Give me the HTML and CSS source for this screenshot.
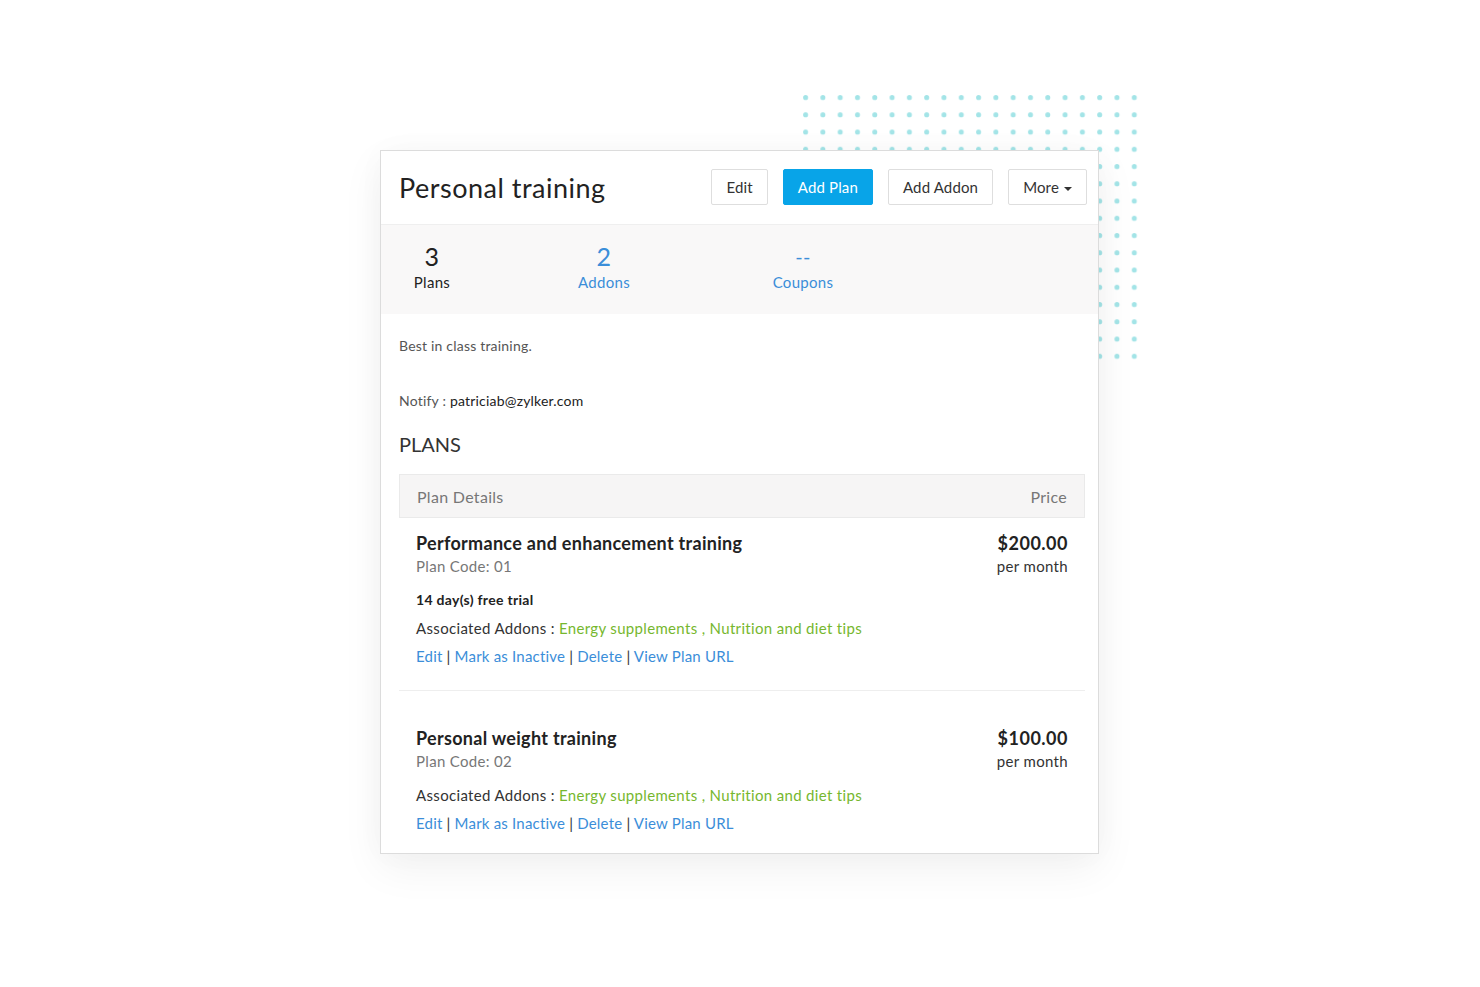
FILE: index.html
```html
<!DOCTYPE html>
<html>
<head>
<meta charset="utf-8">
<link rel="stylesheet" href="styles.css">
</head>
<body>
<div class="stage">
  <svg class="dots" width="340" height="270" viewBox="0 0 340 270">
    <defs>
      <pattern id="dp" x="0" y="0" width="17.3" height="17.25" patternUnits="userSpaceOnUse">
        <circle cx="2.6" cy="2.6" r="2.5" fill="#a3e4e7"/>
      </pattern>
    </defs>
    <rect x="0" y="0" width="340" height="270" fill="url(#dp)"/>
  </svg>
  <div class="card">
    <div class="card-head">
      <h1 class="title">Personal training</h1>
      <div class="actions">
        <button class="btn">Edit</button>
        <button class="btn btn-primary">Add Plan</button>
        <button class="btn">Add Addon</button>
        <button class="btn">More <span class="caret"></span></button>
      </div>
    </div>
    <div class="stats">
      <div class="stat stat-plans"><div class="num">3</div><div class="lbl">Plans</div></div>
      <div class="stat stat-addons link"><div class="num">2</div><div class="lbl">Addons</div></div>
      <div class="stat stat-coupons link"><div class="num dash">--</div><div class="lbl">Coupons</div></div>
    </div>
    <div class="body">
      <p class="desc">Best in class training.</p>
      <p class="notify">Notify : <span class="email">patriciab@zylker.com</span></p>
      <h2 class="section">PLANS</h2>
      <div class="table-head"><span>Plan Details</span><span>Price</span></div>
      <div class="plan">
        <div class="plan-top">
          <div>
            <div class="plan-name">Performance and enhancement training</div>
            <div class="plan-code">Plan Code: 01</div>
          </div>
          <div class="price">
            <div class="amount">$200.00</div>
            <div class="per">per month</div>
          </div>
        </div>
        <div class="trial">14 day(s) free trial</div>
        <div class="addons">Associated Addons : <span class="green">Energy supplements , Nutrition and diet tips</span></div>
        <div class="links"><a>Edit</a> <span class="sep">|</span> <a>Mark as Inactive</a> <span class="sep">|</span> <a>Delete</a> <span class="sep">|</span> <a>View Plan URL</a></div>
      </div>
      <div class="plan plan-last">
        <div class="plan-top">
          <div>
            <div class="plan-name">Personal weight training</div>
            <div class="plan-code">Plan Code: 02</div>
          </div>
          <div class="price">
            <div class="amount">$100.00</div>
            <div class="per">per month</div>
          </div>
        </div>
        <div class="addons">Associated Addons : <span class="green">Energy supplements , Nutrition and diet tips</span></div>
        <div class="links"><a>Edit</a> <span class="sep">|</span> <a>Mark as Inactive</a> <span class="sep">|</span> <a>Delete</a> <span class="sep">|</span> <a>View Plan URL</a></div>
      </div>
    </div>
  </div>
</div>
</body>
</html>
```

FILE: styles.css
```css
* { box-sizing: border-box; }
html, body { margin: 0; padding: 0; background: #fff; }
body {
  font-family: Lato, "Liberation Sans", sans-serif;
  color: #222;
  width: 1480px;
  height: 987px;
  overflow: hidden;
}
.stage {
  position: relative;
  padding: 150px 0 0 380px;
}
.dots {
  position: absolute;
  left: 803px;
  top: 95px;
  z-index: 0;
}
.card {
  position: relative;
  z-index: 1;
  width: 719px;
  height: 704px;
  background: #fff;
  border: 1px solid #dcdcdc;
  box-shadow: 0 14px 40px rgba(0,0,0,0.06), 0 0 30px rgba(0,0,0,0.025);
}
.card-head {
  height: 74px;
  display: flex;
  align-items: center;
  justify-content: space-between;
  padding: 0 11px 0 18px;
  border-bottom: 1px solid #efefef;
}
.title {
  margin: 0;
  font-size: 27px;
  font-weight: 400;
  color: #222;
  letter-spacing: 0.5px;
}
.actions { display: flex; gap: 15px; margin-top: -1px; }
.btn {
  height: 36px;
  font-family: inherit;
  font-size: 15px;
  letter-spacing: 0.15px;
  color: #333;
  background: #fff;
  border: 1px solid #dedede;
  border-radius: 2px;
  padding: 0 14px;
}
.btn-primary {
  background: #08a4e8;
  border-color: #08a4e8;
  color: #fff;
}
.caret {
  display: inline-block;
  width: 0; height: 0;
  border-left: 4px solid transparent;
  border-right: 4px solid transparent;
  border-top: 4px solid #333;
  vertical-align: middle;
  margin-left: 1px;
}
.stats {
  height: 89px;
  background: #f9f8f8;
  display: flex;
  padding-top: 15px;
}
.stat { text-align: center; letter-spacing: 0.3px; }
.stat-plans { width: 102px; }
.stat-addons { width: 242px; }
.stat-coupons { width: 156px; }
.num { font-size: 25px; line-height: 32px; color: #222; }
.lbl { font-size: 15px; line-height: 20px; color: #222; }
.link .num, .link .lbl { color: #3b8ed9; }
.dash { font-size: 20px; }
.body { padding: 0 13px 0 18px; }
.desc {
  margin: 23px 0 0;
  font-size: 14px;
  line-height: 18px;
  color: #555;
  letter-spacing: 0.2px;
}
.notify {
  margin: 37px 0 0;
  font-size: 14px;
  line-height: 18px;
  color: #555;
  letter-spacing: 0.2px;
}
.email { color: #222; }
.section {
  margin: 22px 0 0;
  font-size: 20px;
  font-weight: 400;
  line-height: 24px;
  color: #333;
}
.table-head {
  margin-top: 18px;
  height: 44px;
  background: #f6f5f5;
  border: 1px solid #eaeaea;
  display: flex;
  justify-content: space-between;
  align-items: center;
  padding: 0 17px;
  font-size: 16px;
  letter-spacing: 0.3px;
  color: #777;
}
.plan {
  padding: 13px 17px 24px;
  border-bottom: 1px solid #eee;
}
.plan-last { border-bottom: none; padding-top: 35px; }
.plan-top { display: flex; justify-content: space-between; }
.plan-name { font-size: 18px; font-weight: 700; line-height: 24px; color: #222; letter-spacing: 0.3px; }
.plan-code { font-size: 15px; line-height: 22px; color: #777; letter-spacing: 0.33px; }
.price { text-align: right; }
.amount { font-size: 18px; font-weight: 700; line-height: 24px; color: #222; letter-spacing: 0.5px; }
.per { font-size: 15px; line-height: 22px; color: #333; letter-spacing: 0.33px; }
.trial { margin-top: 13px; font-size: 14px; font-weight: 700; line-height: 20px; color: #222; letter-spacing: 0.3px; }
.addons { margin-top: 8px; font-size: 15px; line-height: 20px; color: #333; letter-spacing: 0.33px; }
.plan-last .addons { margin-top: 13px; }
.green { color: #76b72e; }
.links { margin-top: 8px; font-size: 15px; line-height: 20px; letter-spacing: 0.2px; }
.links a { color: #3b8ed9; }
.sep { color: #333; }
```
